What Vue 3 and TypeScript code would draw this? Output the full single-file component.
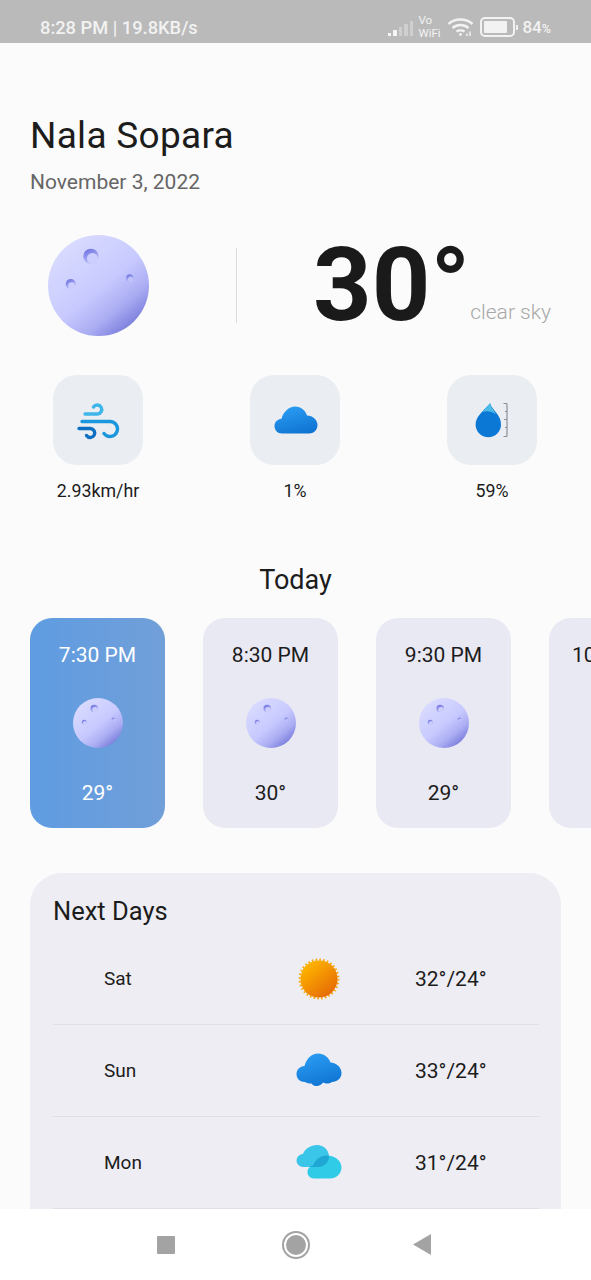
<script setup lang="ts">
interface Stat {
  label: string;
  icon: "wind" | "cloud" | "drop";
}

interface HourCard {
  time: string;
  temp: string;
  active?: boolean;
}

interface DayRow {
  day: string;
  icon: "sun" | "cloud" | "partly";
  temps: string;
}

const stats: Stat[] = [
  { label: "2.93km/hr", icon: "wind" },
  { label: "1%", icon: "cloud" },
  { label: "59%", icon: "drop" },
];

const hours: HourCard[] = [
  { time: "7:30 PM", temp: "29°", active: true },
  { time: "8:30 PM", temp: "30°" },
  { time: "9:30 PM", temp: "29°" },
  { time: "10:30 PM", temp: "29°" },
];

const days: DayRow[] = [
  { day: "Sat", icon: "sun", temps: "32°/24°" },
  { day: "Sun", icon: "cloud", temps: "33°/24°" },
  { day: "Mon", icon: "partly", temps: "31°/24°" },
];

const signalBars = [3, 6, 9, 12, 15];

const partlyBack = "M7 22 A6.5 6.5 0 0 1 7 9 C9 3.5 15 0 21 0 C28 0 33 5 33 12 C33 17 28 22 22 22 Z";
const partlyFront =
  "M18 33.5 C14 33.5 11.5 30.5 11.5 27 C11.5 23.5 14 21 17 20.5 C19 14.5 25 10.5 31 10.5 C39 10.5 45.5 15.5 45.5 22.5 C45.5 29 40 33.5 34 33.5 Z";
</script>

<template>
  <div class="phone">
    <svg class="defs" width="0" height="0" aria-hidden="true">
      <defs>
        <linearGradient id="moonFill" x1="0.15" y1="0.1" x2="0.85" y2="0.95">
          <stop offset="0" stop-color="#d9dbff" />
          <stop offset="0.5" stop-color="#c8caff" />
          <stop offset="0.75" stop-color="#abadf3" />
          <stop offset="1" stop-color="#7074d6" />
        </linearGradient>
        <linearGradient id="craterFill" x1="0.25" y1="0" x2="0.7" y2="1">
          <stop offset="0" stop-color="#6e72e0" />
          <stop offset="1" stop-color="#c4c6fb" />
        </linearGradient>
        <filter id="craterBlur" x="-30%" y="-30%" width="160%" height="160%">
          <feGaussianBlur stdDeviation="0.5" />
        </filter>
        <linearGradient id="blueCloud" x1="0.3" y1="0" x2="0.7" y2="1">
          <stop offset="0" stop-color="#2a9cf2" />
          <stop offset="1" stop-color="#0f74d2" />
        </linearGradient>
        <linearGradient id="sunFill" x1="0.2" y1="0.1" x2="0.85" y2="0.9">
          <stop offset="0" stop-color="#ffb400" />
          <stop offset="1" stop-color="#e56a05" />
        </linearGradient>
        <symbol id="moon" viewBox="0 0 100 100">
          <circle cx="50" cy="50" r="50" fill="url(#moonFill)" />
          <g filter="url(#craterBlur)">
            <circle cx="42.5" cy="21" r="7.5" fill="url(#craterFill)" />
            <circle cx="44" cy="23.2" r="5.4" fill="#cccefd" />
            <circle cx="22.5" cy="48.5" r="5" fill="url(#craterFill)" />
            <circle cx="23.5" cy="50.2" r="3.5" fill="#cccefd" />
            <circle cx="81" cy="42.5" r="3.6" fill="url(#craterFill)" />
            <circle cx="81.6" cy="43.8" r="2.4" fill="#c2c4f9" />
          </g>
        </symbol>
      </defs>
    </svg>

    <header class="status-bar">
      <span class="status-time">8:28 PM | 19.8KB/s</span>
      <div class="status-icons">
        <div class="signal">
          <i
            v-for="(h, i) in signalBars"
            :key="h"
            :class="{ on: i < 2 }"
            :style="{ height: h + 'px' }"
          ></i>
        </div>
        <span class="vowifi">Vo<br />WiFi</span>
        <svg class="wifi" width="27" height="20" viewBox="0 0 27 20" fill="none" stroke="#f2f2f2" stroke-width="2.4">
          <path d="M1.5 7 C8 1 19 1 25.5 7" />
          <path d="M5.5 11 C10 7 17 7 21.5 11" />
          <path d="M9.5 14.6 C11.5 13 15.5 13 17.5 14.6" />
          <circle cx="13.5" cy="17.5" r="1.4" fill="#f2f2f2" stroke="none" />
          <path d="M20 19 V16.5 M23 19 V14.5" stroke-width="1.5" />
        </svg>
        <div class="battery">
          <div class="battery-body"><div class="battery-level"></div></div>
          <div class="battery-tip"></div>
        </div>
        <span class="percent">84<small>%</small></span>
      </div>
    </header>

    <main class="screen">
      <section class="place">
        <h1>Nala Sopara</h1>
        <p>November 3, 2022</p>
      </section>

      <section class="current">
        <div class="current-icon">
          <svg width="101" height="101"><use href="#moon" /></svg>
        </div>
        <div class="current-temp">
          <span class="big-temp">30°</span>
          <span class="sky">clear sky</span>
        </div>
      </section>

      <section class="stats">
        <div v-for="s in stats" :key="s.label" class="stat">
          <div class="tile">
            <svg v-if="s.icon === 'wind'" width="44" height="44" viewBox="0 0 44 44" fill="none" stroke-width="3.4" stroke-linecap="round">
              <path d="M9 16 H21.5 A4.5 4.5 0 1 0 17.5 9" stroke="#3fb6ea" />
              <path d="M6 23.5 H33 A7.5 7.5 0 1 1 28 35.5" stroke="#1b97de" />
              <path d="M3 30.5 H14.5 A4.5 4.5 0 1 1 10.5 37.5" stroke="#0d6fc2" />
            </svg>
            <svg v-else-if="s.icon === 'cloud'" class="tile-cloud" width="44" height="28" viewBox="0 0 44 28">
              <path
                fill="url(#blueCloud)"
                d="M8 27.5 C3.5 27.5 .5 24 .5 20 C.5 16 3.5 13 7.5 12.7 C9.5 5.5 15 .5 21 .5 C27 .5 31.5 4.5 33 9.5 C39 9.5 43.5 14 43.5 19 C43.5 24 39.5 27.5 35 27.5 Z"
              />
            </svg>
            <svg v-else width="36" height="36" viewBox="0 0 36 36" fill="none">
              <path fill="#0b78d6" d="M16 1.3 C18 8 27 13 27 22.5 A12.7 12.7 0 0 1 1.6 22.5 C1.6 14 10 9 16 1.3 Z" />
              <path fill="#4dbbe8" d="M16 1.3 C17.2 5.5 19.5 8.5 22 12 C18 9.2 12.5 8.2 8 10.2 C11 7.4 13.8 4.2 16 1.3 Z" />
              <path stroke="#8b909a" stroke-width="1.2" d="M33 1.5 V34.5 M29.5 1.5 H33 M31 9.5 H33 M30 17.5 H33 M31 25.5 H33 M29.5 34.5 H33" />
            </svg>
          </div>
          <span class="stat-label">{{ s.label }}</span>
        </div>
      </section>

      <h2 class="today">Today</h2>

      <section class="hours">
        <div v-for="h in hours" :key="h.time" class="hour" :class="{ active: h.active }">
          <span class="hour-time">{{ h.time }}</span>
          <svg class="hour-moon" width="50" height="50"><use href="#moon" /></svg>
          <span class="hour-temp">{{ h.temp }}</span>
        </div>
      </section>

      <section class="next">
        <h3>Next Days</h3>
        <div v-for="d in days" :key="d.day" class="day">
          <span class="day-name">{{ d.day }}</span>
          <div class="day-icon">
            <svg v-if="d.icon === 'sun'" width="42" height="42" viewBox="0 0 42 42">
              <circle cx="21" cy="21" r="19.4" fill="none" stroke="#f6a90c" stroke-width="2.2" stroke-dasharray="1.6 2.2" />
              <circle cx="21" cy="21" r="18.6" fill="url(#sunFill)" />
            </svg>
            <svg v-else-if="d.icon === 'cloud'" width="46" height="35" viewBox="0 0 46 35">
              <path
                fill="url(#blueCloud)"
                d="M9 29 C4 29 .5 25.5 .5 21 C.5 16.5 4 13.5 8.5 13 C10.5 5.5 15.5 .5 22 .5 C28 .5 32.5 4 34.5 9.5 C40.5 10 45.5 14 45.5 20 C45.5 25.5 41 29 36 29 C33 31 29.5 31 27 29.6 C24.5 33.5 18.5 34.5 15.5 30.5 C13.5 30.5 11 30 9 29 Z"
              />
            </svg>
            <svg v-else width="46" height="35" viewBox="0 0 46 35">
              <defs>
                <clipPath id="partlyClip"><path :d="partlyBack" /></clipPath>
              </defs>
              <path fill="#3ac6e8" :d="partlyBack" />
              <path fill="#30cbe6" :d="partlyFront" />
              <path fill="#1fa6d3" :d="partlyFront" clip-path="url(#partlyClip)" />
            </svg>
          </div>
          <span class="day-temps">{{ d.temps }}</span>
        </div>
      </section>
    </main>

    <nav class="nav-bar">
      <div class="nav-item"><div class="nav-square"></div></div>
      <div class="nav-item"><div class="nav-circle"></div></div>
      <div class="nav-item">
        <svg class="nav-back" width="18" height="21" viewBox="0 0 18 21"><path d="M0 10.5 L18 0 V21 Z" fill="#a3a3a3" /></svg>
      </div>
    </nav>
  </div>
</template>

<style scoped>
.phone {
  width: 591px;
  height: 1280px;
  display: flex;
  flex-direction: column;
  overflow: hidden;
  background: #fbfbfb;
  font-family: Roboto, "Liberation Sans", sans-serif;
  color: #1c1c1c;
}

.defs {
  position: absolute;
}

/* Status bar */
.status-bar {
  height: 43px;
  flex: none;
  display: flex;
  align-items: center;
  justify-content: space-between;
  padding: 11px 40px 0 40px;
  box-sizing: border-box;
  background: #bababa;
  color: #f2f2f2;
}

.status-time {
  font-size: 18.3px;
  font-weight: 500;
}

.status-icons {
  display: flex;
  align-items: center;
}

.signal {
  display: flex;
  align-items: flex-end;
  gap: 2px;
  height: 16px;
  margin-top: 2px;
}

.signal i {
  width: 3.5px;
  background: #cfcfcf;
}

.signal i.on {
  background: #f5f5f5;
}

.vowifi {
  margin-left: 5px;
  width: 24px;
  font-size: 11.5px;
  line-height: 13.5px;
}

.wifi {
  margin-left: 5px;
}

.battery {
  margin-left: 6px;
  display: flex;
  align-items: center;
  gap: 1px;
}

.battery-body {
  width: 27px;
  height: 12px;
  padding: 2px;
  border: 2px solid #f2f2f2;
  border-radius: 5px;
}

.battery-level {
  width: 84%;
  height: 100%;
  border-radius: 1px;
  background: #f2f2f2;
}

.battery-tip {
  width: 2px;
  height: 5px;
  border-radius: 0 1px 1px 0;
  background: #f2f2f2;
}

.percent {
  margin-left: 4px;
  font-size: 17px;
  font-weight: 500;
}

.percent small {
  font-size: 12.5px;
}

/* Main column */
.screen {
  flex: 1;
  min-height: 0;
  overflow: hidden;
}

.place {
  padding: 70px 30px 0 30px;
}

.place h1 {
  margin: 0;
  font-size: 37px;
  line-height: 46px;
  font-weight: 400;
  letter-spacing: 0.3px;
}

.place p {
  margin: 11px 0 0;
  font-size: 21px;
  line-height: 24px;
  color: #666;
}

.current {
  margin-top: 41px;
  display: flex;
  align-items: center;
  height: 101px;
  padding-left: 48px;
}

.current-icon {
  width: 101px;
  height: 101px;
  margin-right: 87px;
}

.current-temp {
  flex: 1;
  height: 75px;
  margin-top: -1px;
  display: flex;
  align-items: center;
  padding: 0 40px 0 76px;
  border-left: 1px solid #dcdcdc;
  position: relative;
}

.big-temp {
  font-size: 102.3px;
  line-height: 75px;
  font-weight: 700;
  color: #1a1a1a;
}

.sky {
  position: absolute;
  right: 40px;
  bottom: -1px;
  font-size: 21px;
  line-height: 24px;
  font-weight: 300;
  color: #a8a8a8;
}

.stats {
  margin-top: 39px;
  display: flex;
  justify-content: center;
  gap: 107px;
  padding-right: 1px;
}

.stat {
  width: 90px;
  display: flex;
  flex-direction: column;
  align-items: center;
}

.tile {
  width: 90px;
  height: 90px;
  display: flex;
  align-items: center;
  justify-content: center;
  border-radius: 24px;
  background: #eaedf2;
}

.tile-cloud {
  margin-left: 2px;
}

.stat-label {
  margin-top: 15px;
  font-size: 17.8px;
  line-height: 22px;
  white-space: nowrap;
}

.today {
  margin: 61px 0 0;
  text-align: center;
  font-size: 27px;
  line-height: 34px;
  font-weight: 400;
}

.hours {
  margin-top: 21px;
  display: flex;
  gap: 38px;
  padding-left: 30px;
}

.hour {
  flex: none;
  width: 135px;
  height: 210px;
  box-sizing: border-box;
  padding: 24px 0 22px;
  display: flex;
  flex-direction: column;
  align-items: center;
  justify-content: space-between;
  border-radius: 22px;
  background: #e9e9f3;
  font-size: 21px;
  line-height: 26px;
}

.hour.active {
  background: linear-gradient(90deg, #5f9ce2, #719fd8);
  color: #fff;
}

.hour-time {
  white-space: nowrap;
}

.hour-moon {
  margin-bottom: 3px;
}

.next {
  margin-top: 45px;
  margin-left: 30px;
  width: 531px;
  box-sizing: border-box;
  padding: 22px 22px 60px 23px;
  border-radius: 32px;
  background: #eeedf4;
}

.next h3 {
  margin: 0;
  font-size: 25.5px;
  line-height: 32px;
  font-weight: 400;
}

.day {
  height: 92px;
  display: grid;
  grid-template-columns: 243px 46px auto;
  align-items: center;
  border-bottom: 1px solid #dfdfe7;
  box-sizing: border-box;
  font-size: 19px;
}

.day:first-of-type {
  margin-top: 6px;
}

.day-name {
  padding-left: 51px;
}

.day-icon {
  display: flex;
  justify-content: center;
}

.day-temps {
  padding-left: 73px;
  font-size: 21px;
}

/* Navigation bar */
.nav-bar {
  flex: none;
  height: 71px;
  display: flex;
  justify-content: center;
  align-items: center;
  background: #fff;
}

.nav-item {
  width: 129px;
  display: flex;
  justify-content: center;
}

.nav-square {
  width: 18px;
  height: 18px;
  margin-right: 1px;
  border-radius: 1px;
  background: #a3a3a3;
}

.nav-circle {
  width: 20px;
  height: 20px;
  border: 2px solid #fff;
  border-radius: 50%;
  background: #a3a3a3;
  box-shadow: 0 0 0 2px #a3a3a3;
}

.nav-back {
  margin-right: 6px;
}
</style>
